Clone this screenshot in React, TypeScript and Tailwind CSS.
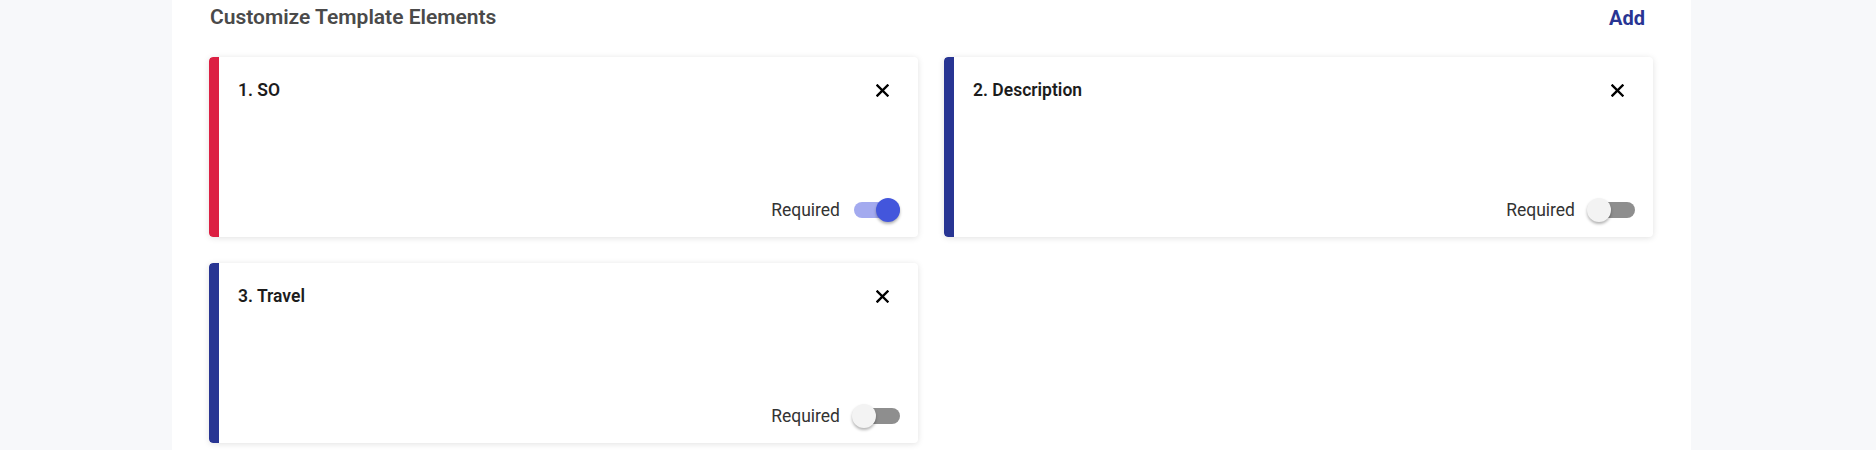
import { useState } from "react"

type Element = {
  id: number
  name: string
  accent: string
  required: boolean
}

const initial: Element[] = [
  { id: 1, name: "SO", accent: "bg-[#dc2043]", required: true },
  { id: 2, name: "Description", accent: "bg-[#283593]", required: false },
  { id: 3, name: "Travel", accent: "bg-[#283593]", required: false },
]

function Toggle({ on, onChange }: { on: boolean; onChange: () => void }) {
  return (
    <button
      type="button"
      onClick={onChange}
      className="relative flex h-6 w-[48px] items-center"
    >
      <span
        className={
          on
            ? "ml-[2px] h-[16px] w-full rounded-full bg-[#a3aaef]"
            : "ml-[2px] h-[16px] w-full rounded-full bg-[#8e8e8e]"
        }
      />
      <span
        className={
          on
            ? "absolute right-0 top-0 size-6 rounded-full bg-[#4356dc] shadow-[0_2px_3px_rgba(0,0,0,0.3)]"
            : "absolute left-0 top-0 size-6 rounded-full bg-[#f3f3f3] shadow-[0_2px_3px_rgba(0,0,0,0.3)]"
        }
      />
    </button>
  )
}

function CloseIcon() {
  return (
    <svg width="13" height="13" viewBox="0 0 13 13" className="text-black">
      <path d="M1.5 1.5 L11.5 11.5 M11.5 1.5 L1.5 11.5" stroke="currentColor" strokeWidth="2.4" strokeLinecap="square" />
    </svg>
  )
}

function ElementCard({ item, index, onToggle }: { item: Element; index: number; onToggle: () => void }) {
  return (
    <div className="flex h-[180px] overflow-hidden rounded-[4px] bg-white shadow-[0_1px_6px_rgba(0,0,0,0.12)]">
      <div className={`w-[10px] shrink-0 rounded-l-[4px] ${item.accent}`} />
      <div className="flex flex-1 flex-col justify-between pb-[15px] pl-[19px] pr-[18px] pt-[21px]">
        <div className="flex items-center justify-between pr-[11px]">
          <span className="text-[17.5px] font-semibold leading-6 text-[#1c1c1c]">
            {index}. {item.name}
          </span>
          <CloseIcon />
        </div>
        <div className="flex items-center justify-end gap-3">
          <span className="text-[17.5px] leading-6 text-[#333333]">Required</span>
          <Toggle on={item.required} onChange={onToggle} />
        </div>
      </div>
    </div>
  )
}

export default function App() {
  const [items, setItems] = useState(initial)

  const toggle = (id: number) =>
    setItems((prev) => prev.map((it) => (it.id === id ? { ...it, required: !it.required } : it)))

  return (
    <div
      className="flex min-h-[450px] w-[1876px] bg-[#f7f8fa] pl-[172px]"
      style={{ fontFamily: "Roboto, 'Liberation Sans', sans-serif" }}
    >
      <div className="min-h-[450px] w-[1519px] bg-white pl-[37px] pr-[38px] pt-1">
        <div className="flex h-7 items-center justify-between pl-px pr-2">
          <h2 className="text-[21px] font-semibold text-[#4a4a4a]">Customize Template Elements</h2>
          <button type="button" className="text-[20px] font-bold text-[#283593]">
            Add
          </button>
        </div>
        <div className="mt-[25px] grid grid-cols-2 gap-[26px]">
          {items.map((item, i) => (
            <ElementCard key={item.id} item={item} index={i + 1} onToggle={() => toggle(item.id)} />
          ))}
        </div>
      </div>
    </div>
  )
}
